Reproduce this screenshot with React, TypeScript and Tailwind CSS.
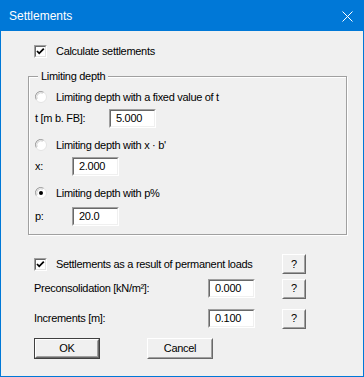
import React from "react";

const font = { fontFamily: '"Liberation Sans", Arial, sans-serif' };

function CheckBox() {
  return (
    <div className="w-[13px] h-[13px] flex border border-t-[#a0a0a0] border-l-[#a0a0a0] border-b-white border-r-white shrink-0">
      <div className="flex-1 flex items-center justify-center bg-white border border-t-[#696969] border-l-[#696969] border-b-[#e3e3e3] border-r-[#e3e3e3]">
        <svg width="9" height="9" viewBox="0 0 9 9">
          <polyline points="1,4 3.2,6.3 7.8,1.6" fill="none" stroke="#000" strokeWidth="1.8" />
        </svg>
      </div>
    </div>
  );
}

function Radio({ on }: { on?: boolean }) {
  return (
    <svg width="12" height="12" viewBox="0 0 12 12" className="shrink-0">
      <circle cx="6" cy="6" r="5.5" fill="#fff" stroke="#e3e3e3" />
      <path d="M1.2 8.5 A5.3 5.3 0 0 1 8.5 1.2" fill="none" stroke="#a0a0a0" strokeWidth="1" />
      <path d="M2.2 7.8 A4.2 4.2 0 0 1 7.8 2.2" fill="none" stroke="#d0d0d0" strokeWidth="1" />
      {on && <circle cx="6" cy="6" r="2" fill="#000" />}
    </svg>
  );
}

function Field({ value }: { value: string }) {
  return (
    <div className="w-[47px] h-[19px] flex border border-t-[#a0a0a0] border-l-[#a0a0a0] border-b-white border-r-white shrink-0">
      <div className="flex-1 flex items-center bg-white border border-t-[#696969] border-l-[#696969] border-b-[#f0f0f0] border-r-[#f0f0f0] pl-[5px] text-[11px] text-black">
        {value}
      </div>
    </div>
  );
}

function Btn({ children, w, def }: { children: React.ReactNode; w: string; def?: boolean }) {
  return (
    <div className={`${w} h-[21px] flex shrink-0 ${def ? "border border-[#404040]" : ""}`}>
      <div className="flex-1 flex border border-t-white border-l-white border-b-[#696969] border-r-[#696969]">
        <div className="flex-1 flex items-center justify-center bg-[#f0f0f0] border border-t-[#f0f0f0] border-l-[#f0f0f0] border-b-[#a0a0a0] border-r-[#a0a0a0] text-[11px] text-black">
          {children}
        </div>
      </div>
    </div>
  );
}

function Help() {
  return (
    <div className="w-[24px] h-[20px] flex shrink-0">
      <div className="flex-1 flex border border-t-white border-l-white border-b-[#696969] border-r-[#696969]">
        <div className="flex-1 flex items-center justify-center bg-[#f0f0f0] border border-t-[#f0f0f0] border-l-[#f0f0f0] border-b-[#a0a0a0] border-r-[#a0a0a0] text-[11px] text-black">
          ?
        </div>
      </div>
    </div>
  );
}

export default function App() {
  return (
    <div className="w-[364px] h-[377px] border border-[#0078d7] bg-[#f0f0f0] flex flex-col text-[11px] text-black" style={font}>
      {/* Titelleiste */}
      <div className="h-[30px] bg-[#0078d7] flex items-center justify-between pl-[8px] pr-[10px] shrink-0">
        <span className="text-white text-[12px]">Settlements</span>
        <svg width="11" height="11" viewBox="0 0 11 11">
          <path d="M0.5 0.5 L10.5 10.5 M10.5 0.5 L0.5 10.5" stroke="#fff" strokeWidth="1" />
        </svg>
      </div>

      <div className="flex flex-col pl-[27px] pt-[12px] tracking-[-0.3px]">
        <div className="h-[16px] flex items-center gap-[9px] pl-[6px]">
          <CheckBox />
          <span>Calculate settlements</span>
        </div>

        {/* Limiting depth */}
        <div className="relative mt-[17px] w-[319px] h-[159px] border border-[#a0a0a0] shadow-[1px_1px_0_#fff,inset_1px_1px_0_#fff] flex flex-col pl-[6px] pt-[12px]">
          <span className="absolute -top-[7px] left-[9px] px-[3px] bg-[#f0f0f0] leading-[13px]">Limiting depth</span>
          <div className="h-[16px] flex items-center gap-[9px]">
            <Radio />
            <span>Limiting depth with a fixed value of t</span>
          </div>
          <div className="h-[19px] mt-[4px] flex items-center">
            <span className="w-[74px]">t [m b. FB]:</span>
            <Field value="5.000" />
          </div>
          <div className="h-[16px] mt-[9px] flex items-center gap-[9px]">
            <Radio />
            <span>Limiting depth with x · b'</span>
          </div>
          <div className="h-[19px] mt-[4px] flex items-center">
            <span className="w-[37px]">x:</span>
            <Field value="2.000" />
          </div>
          <div className="h-[16px] mt-[9px] flex items-center gap-[9px]">
            <Radio on />
            <span>Limiting depth with p%</span>
          </div>
          <div className="h-[19px] mt-[6px] flex items-center">
            <span className="w-[37px]">p:</span>
            <Field value="20.0" />
          </div>
        </div>

        <div className="h-[20px] mt-[19px] flex items-center pl-[6px]">
          <CheckBox />
          <span className="ml-[9px] w-[226px]">Settlements as a result of permanent loads</span>
          <Help />
        </div>
        <div className="h-[19px] mt-[5px] flex items-center pl-[6px]">
          <span className="w-[174px]">Preconsolidation [kN/m²]:</span>
          <Field value="0.000" />
          <div className="ml-[27px]"><Help /></div>
        </div>
        <div className="h-[19px] mt-[11px] flex items-center pl-[6px]">
          <span className="w-[174px]">Increments [m]:</span>
          <Field value="0.100" />
          <div className="ml-[27px]"><Help /></div>
        </div>

        <div className="mt-[10px] flex items-center pl-[6px] gap-[47px]">
          <Btn w="w-[66px]" def>OK</Btn>
          <Btn w="w-[66px]">Cancel</Btn>
        </div>
      </div>
    </div>
  );
}
